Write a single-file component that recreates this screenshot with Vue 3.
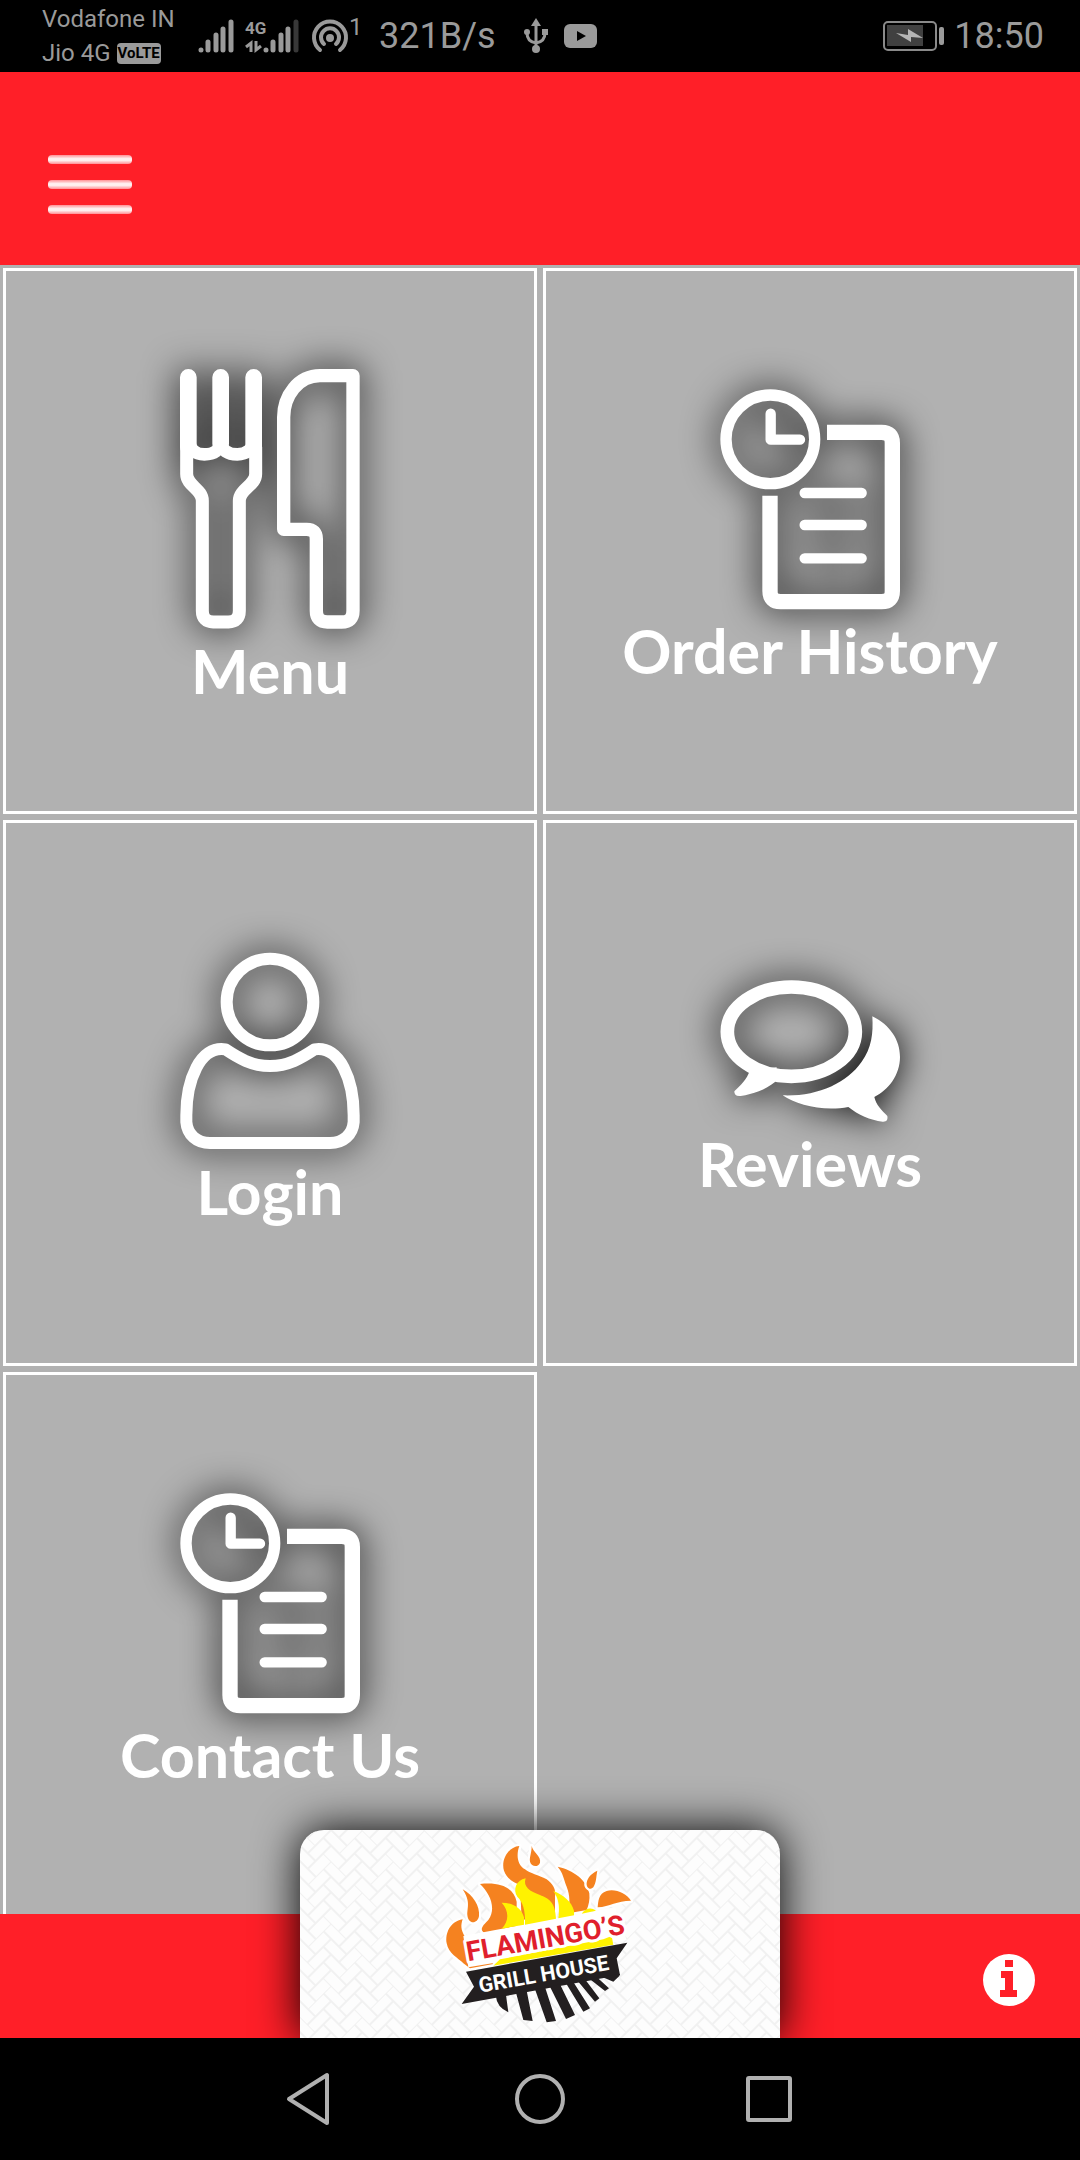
<script setup>
const tiles = [
  { label: 'Menu', icon: 'cutlery' },
  { label: 'Order History', icon: 'history' },
  { label: 'Login', icon: 'user' },
  { label: 'Reviews', icon: 'reviews' },
  { label: 'Contact Us', icon: 'history' },
]
</script>

<template>
  <div class="screen">
    <div class="status">
      <div class="carriers">
        <span>Vodafone IN</span>
        <span class="carrier-line">Jio 4G <b class="volte">VoLTE</b></span>
      </div>
      <svg class="signals" width="101" height="34" viewBox="0 0 101 34" aria-hidden="true">
        <g stroke="#9a9a9a" stroke-width="5" stroke-linecap="round">
          <path d="M3 31v0M10 31v-8M18 31v-15M25 31v-21M33 31v-28" />
          <path d="M68 31v0M75 31v-8M83 31v-15M90 31v-21" />
          <path d="M98 31v-28" stroke="#383838" />
        </g>
        <text x="47" y="15" class="net">4G</text>
        <path d="M53 33V24l-5 4M58 22v9l5-4" stroke="#9a9a9a" stroke-width="3" fill="none" />
      </svg>
      <svg class="hotspot" width="48" height="34" viewBox="0 0 48 34" aria-hidden="true">
        <g fill="none" stroke="#9a9a9a" stroke-width="4" stroke-linecap="round">
          <path d="M8 31a16 16 0 1 1 20 0" />
          <path d="M12 25a9 9 0 1 1 12 0" />
        </g>
        <circle cx="18" cy="19" r="4" fill="#9a9a9a" />
        <text x="37" y="16" class="count">1</text>
      </svg>
      <span class="speed">321B/s</span>
      <svg class="usb" width="24" height="36" viewBox="0 0 24 36" aria-hidden="true">
        <g fill="none" stroke="#9a9a9a" stroke-width="3">
          <path d="M12 6v26M12 25C5 24 3 20 3 15M12 25c7-1 9-5 9-10" />
        </g>
        <path d="M12 0l5 8H7z" fill="#9a9a9a" />
        <circle cx="12" cy="31" r="4" fill="#9a9a9a" />
        <circle cx="3" cy="14" r="3" fill="#9a9a9a" />
        <path d="M18 11h6v6h-6z" fill="#9a9a9a" />
      </svg>
      <svg class="video" width="33" height="24" viewBox="0 0 33 24" aria-hidden="true">
        <rect width="33" height="24" rx="6" fill="#9a9a9a" />
        <path d="M13 7l9 5-9 5z" fill="#000" />
      </svg>
      <svg class="battery" width="62" height="30" viewBox="0 0 62 30" aria-hidden="true">
        <rect x="1" y="1" width="52" height="28" rx="4" fill="none" stroke="#8a8a8a" stroke-width="2" />
        <rect x="4" y="4" width="36" height="21" fill="#404040" />
        <path d="M13 12l12 2 0-6 15 9-12-1 0 5z" fill="#b5b5b5" />
        <rect x="56" y="6" width="5" height="18" rx="2" fill="#9a9a9a" />
      </svg>
      <span class="clock">18:50</span>
    </div>

    <header class="topbar">
      <button class="burger" type="button" aria-label="Open menu">
        <span></span><span></span><span></span>
      </button>
    </header>

    <main class="content">
      <nav class="grid">
        <a v-for="tile in tiles" :key="tile.label" class="tile" href="#">
          <svg v-if="tile.icon === 'cutlery'" class="icon" viewBox="0 0 540 780" aria-hidden="true">
            <g class="stroke">
              <path stroke-width="50" d="M25 25V235M122 25V225M221 25V235" />
              <path stroke-width="38" d="M28 215C28 240 45 256 73 256S122 245 122 215C122 245 145 256 172 256S220 240 220 215" />
              <path stroke-width="39" d="M20 235V315C20 350 67 360 67 395V725Q67 758 100 759H145Q178 758 178 725V395C178 360 227 350 227 315V235" />
              <path stroke-width="40" d="M519 20H420C355 20 311 80 311 145V481H380Q409 481 409 510V725Q409 759 442 759H485Q519 759 519 725Z" />
            </g>
          </svg>
          <svg v-else-if="tile.icon === 'history'" class="icon" viewBox="0 0 540 662" aria-hidden="true">
            <g class="stroke">
              <circle cx="151" cy="151" r="133" stroke-width="34" />
              <path stroke-width="31" d="M152 74V152H240M254 312H425M254 408H425M254 508H425" />
              <path stroke-width="46" stroke-linecap="butt" class="sheet" d="M321 130H485Q517 130 517 162V606Q517 638 485 638H182Q150 638 150 606V320" />
            </g>
          </svg>
          <svg v-else-if="tile.icon === 'user'" class="icon" viewBox="0 0 540 594" aria-hidden="true">
            <g class="stroke" stroke-width="36">
              <circle cx="270" cy="150" r="130" />
              <path d="M136 292C60 280 19 385 19 490V510C22 548 50 573 90 573H450C490 573 518 548 521 510V490C521 385 480 280 404 292C365 318 325 342 270 342S175 318 136 292Z" />
            </g>
          </svg>
          <svg v-else class="icon" viewBox="0 0 540 426" aria-hidden="true">
            <ellipse class="stroke" cx="214" cy="155" rx="192" ry="134" stroke-width="41" />
            <g fill="#fff">
              <path d="M90 270C80 300 62 315 43 334Q42 350 62 348C100 342 135 330 165 306L170 262L150 264L130 278V258Z" />
              <path d="M457 109C510 135 540 180 540 231C540 285 505 330 463 351C468 375 485 390 502 408Q506 426 488 425C450 420 415 405 385 381C310 395 230 375 188 346C290 350 380 310 425 245C455 205 460 160 457 109Z" />
            </g>
          </svg>
          <span class="label">{{ tile.label }}</span>
        </a>
      </nav>
    </main>

    <footer class="bottombar">
      <div class="brand">
        <svg class="weave" width="100%" height="100%" aria-hidden="true">
          <defs>
            <pattern id="weave" width="44" height="44" patternUnits="userSpaceOnUse" patternTransform="rotate(45)">
              <path
                d="M0 0H22M33 0H44M0 11H33M11 22H44M22 33H44M0 33H11M0 0V33M11 11V44M22 22V44M22 0V11M33 33V44M33 0V22"
                fill="none" stroke="#f1f1f1" stroke-width="2"
              />
            </pattern>
          </defs>
          <rect width="100%" height="100%" fill="url(#weave)" />
        </svg>
        <svg class="logo" viewBox="0 0 660 615" role="img" aria-label="Flamingo's Grill House">
          <g fill="#f58220" stroke="#fff" stroke-width="14" paint-order="stroke" stroke-linejoin="round">
            <path d="M98 268C60 275 45 310 50 340C55 370 85 385 100 400L120 415L190 402L105 320C92 300 92 285 98 268Z" />
            <path d="M150 162C215 155 252 175 260 215L260 300L165 310C145 300 160 285 175 270C200 235 180 190 150 162Z" />
            <path d="M268 48C235 50 212 90 222 122C232 150 255 158 270 165L275 270L375 255L375 200C378 180 372 165 350 148C325 135 300 130 285 118C262 105 258 75 268 48Z" />
            <path d="M383 110C430 120 470 150 478 190C480 210 476 225 470 240L415 250C420 220 420 195 410 170C400 145 400 130 383 110Z" />
            <path d="M603 212C590 190 555 175 530 183C505 190 505 215 503 232C540 230 560 212 603 212Z" />
            <path d="M98 178C130 195 150 230 147 258C143 282 115 285 112 255C112 230 122 215 98 178Z" />
            <path d="M305 48C308 65 335 80 330 98C325 112 305 112 300 95C298 80 305 70 305 48Z" />
            <path d="M502 122C498 140 500 155 490 172C480 182 468 172 470 158C474 140 485 130 502 122Z" />
          </g>
          <path fill="#fff" d="M100 318L555 232L590 330L115 412Z" />
          <g fill="#fff200">
            <path d="M215 218C250 218 275 235 282 262L282 284L215 296C240 270 235 240 215 218Z" />
            <path d="M287 145C258 150 248 180 262 200C278 215 287 240 285 284L378 266C376 215 355 205 330 195C300 185 278 170 287 145Z" />
            <path d="M370 183C400 195 425 215 432 242L432 256L385 265C390 225 385 205 370 183Z" />
            <path d="M190 407L210 388L520 328L545 318L550 344Z" />
            <path d="M455 251Q475 226 498 242Z" />
          </g>
          <path fill="#231f20" d="M108 425L592 338L560 385L570 435L95 522L132 470Z" />
          <path
            fill="#231f20"
            d="M198 500L228 495L235 547Q200 530 198 500ZM258 488L290 482L308 573L280 570ZM315 478L345 471L378 573L350 577ZM360 470L390 463L435 555L408 567ZM408 460L430 456L480 535L460 545ZM445 455L465 448L508 505L495 515ZM480 448L500 441L537 475L525 483ZM515 440L570 432L568 438L550 455Z"
          />
          <text class="flamingo" transform="translate(114 394) rotate(-10)">FLAMINGO’S</text>
          <text class="grill" transform="translate(150 488) rotate(-10)">GRILL HOUSE</text>
        </svg>
      </div>
      <button class="info" type="button" aria-label="Information">
        <svg width="52" height="52" viewBox="0 0 52 52" aria-hidden="true">
          <circle cx="26" cy="26" r="26" fill="#fff" />
          <path d="M22 6h8v7h-8zM18 17h12v19h4v7H17v-7h5V24h-4z" fill="#ff1f28" />
        </svg>
      </button>
    </footer>

    <div class="sysnav">
      <button type="button" aria-label="Back">
        <svg width="50" height="50" viewBox="0 0 50 50">
          <path d="M4 25L42 1V49Z" />
        </svg>
      </button>
      <button type="button" aria-label="Home">
        <svg width="50" height="50" viewBox="0 0 50 50"><circle cx="25" cy="25" r="23" /></svg>
      </button>
      <button type="button" aria-label="Recent apps">
        <svg width="50" height="50" viewBox="0 0 50 50"><rect x="3" y="4" width="42" height="42" rx="1" /></svg>
      </button>
    </div>
  </div>
</template>

<style>
body {
  margin: 0;
  background: #000;
}
</style>

<style scoped>
.screen {
  display: flex;
  flex-direction: column;
  height: 100vh;
  background: #b1b1b1;
  font-family: Lato, sans-serif;
}

button {
  padding: 0;
  border: 0;
  background: none;
  cursor: pointer;
}

svg {
  display: block;
  overflow: visible;
}

.status {
  display: flex;
  flex: none;
  align-items: center;
  height: 72px;
  padding: 0 36px 0 42px;
  background: #000;
  color: #9a9a9a;
  font-family: Roboto, sans-serif;
}

.carriers {
  display: flex;
  flex-direction: column;
  width: 156px;
  font-size: 24px;
  line-height: 34px;
}

.carrier-line {
  display: flex;
  align-items: center;
  gap: 6px;
}

.volte {
  padding: 0 1px;
  border-radius: 4px;
  background: #9a9a9a;
  color: #000;
  font-size: 15px;
  line-height: 21px;
}

.net {
  fill: #9a9a9a;
  font-size: 17px;
  font-weight: 700;
}

.count {
  fill: #9a9a9a;
  font-size: 24px;
}

.hotspot {
  margin-left: 13px;
}

.speed {
  margin-left: 19px;
  font-size: 36px;
  line-height: 72px;
}

.usb {
  margin-left: 28px;
}

.video {
  margin-left: 16px;
}

.battery {
  margin-left: auto;
}

.clock {
  margin-left: 9px;
  font-size: 36px;
  line-height: 72px;
}

.topbar {
  display: flex;
  flex: none;
  height: 193px;
  padding-left: 48px;
  background: #ff1f28;
  align-items: center;
}

.burger {
  display: flex;
  flex-direction: column;
  gap: 16px;
  width: 84px;
  margin-top: 32px;
}

.burger span {
  height: 9px;
  border-radius: 4px;
  background: linear-gradient(#ff9095, #fff0f0 40%, #fff0f0 60%, #ff9095);
}

.content {
  flex: 1;
  min-height: 0;
  overflow: hidden;
}

.grid {
  display: grid;
  grid-template-columns: 1fr 1fr;
  grid-auto-rows: 546px;
  gap: 6px;
  padding: 3px;
}

.tile {
  display: flex;
  flex-direction: column;
  align-items: center;
  justify-content: center;
  border: 3px solid #fff;
  color: #fff;
  text-decoration: none;
}

.icon {
  width: 180px;
  filter: drop-shadow(0 0 18px #000);
}

.stroke {
  fill: none;
  stroke: #fff;
  stroke-linecap: round;
  stroke-linejoin: round;
}

.sheet {
  stroke-linecap: butt;
}

.label {
  position: relative;
  font-size: 61px;
  font-weight: 700;
  line-height: 84px;
}

.bottombar {
  position: relative;
  display: flex;
  flex: none;
  align-items: center;
  justify-content: flex-end;
  height: 124px;
  padding-right: 45px;
  background: #ff1f28;
}

.info {
  margin-top: 8px;
}

.brand {
  position: absolute;
  bottom: 0;
  left: 50%;
  display: grid;
  width: 480px;
  height: 208px;
  margin-left: -240px;
  overflow: hidden;
  border-radius: 24px 24px 0 0;
  background: #fdfdfd;
  box-shadow: 0 0 45px #000;
}

.weave,
.logo {
  grid-area: 1 / 1;
}

.logo {
  width: 220px;
  margin-left: 130px;
}

.flamingo,
.grill {
  font-family: Roboto, sans-serif;
  font-weight: 700;
}

.flamingo {
  fill: #e01f2d;
  stroke: #fff;
  stroke-width: 18px;
  stroke-linejoin: round;
  paint-order: stroke;
  font-size: 82px;
}

.grill {
  fill: #fff;
  font-size: 64px;
}

.sysnav {
  position: relative;
  display: flex;
  flex: none;
  align-items: center;
  justify-content: center;
  gap: 180px;
  height: 122px;
  background: #000;
}

.sysnav svg {
  fill: none;
  stroke: #b0b0b0;
  stroke-width: 4px;
  stroke-linejoin: round;
}
</style>
